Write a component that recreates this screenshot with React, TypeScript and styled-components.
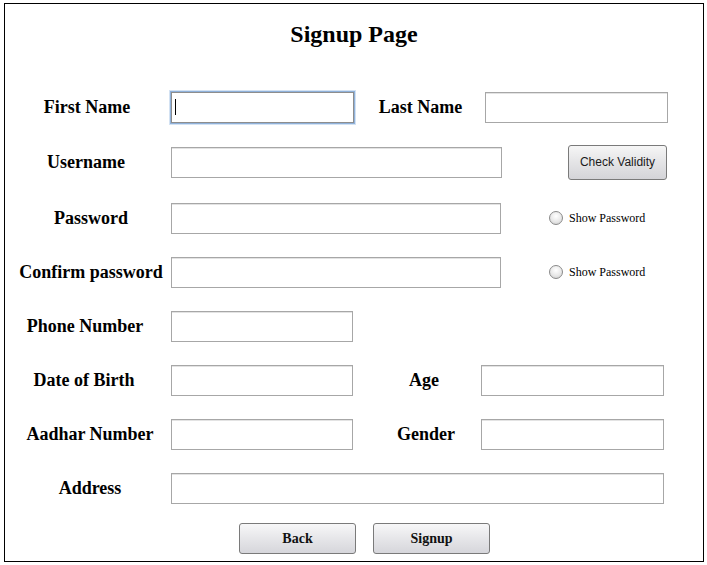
import { FC } from 'react';
import styled, { createGlobalStyle, css } from 'styled-components';

const GlobalStyle = createGlobalStyle`
  body {
    margin: 0;
    background: #ffffff;
    font-family: 'Liberation Serif', 'Times New Roman', serif;
  }
`;

const Frame = styled.div`
  box-sizing: border-box;
  width: 700px;
  height: 559px;
  margin: 3px 0 0 4px;
  border: 1px solid #000000;
  background: #ffffff;
  padding-top: 16px;
`;

const Title = styled.h1`
  margin: 0;
  font-size: 24px;
  line-height: 28px;
  font-weight: bold;
  text-align: center;
  color: #000000;
`;

const Form = styled.div`
  display: flex;
  flex-direction: column;
  gap: 24px;
  margin-top: 44px;
`;

const Row = styled.div<{ $mt?: number }>`
  display: flex;
  align-items: center;
  height: 30px;
  margin-top: ${(p) => p.$mt ?? 0}px;
`;

const Label = styled.label<{ $w: number; $dx?: number }>`
  flex: none;
  box-sizing: border-box;
  width: ${(p) => p.$w}px;
  text-align: center;
  white-space: nowrap;
  font-size: 18px;
  font-weight: bold;
  color: #000000;
  padding-left: ${(p) => Math.max(0, (p.$dx ?? 0) * 2)}px;
  padding-right: ${(p) => Math.max(0, -(p.$dx ?? 0) * 2)}px;
`;

const focusRing = css`
  border-color: #8d8d8d;
  box-shadow: 0 0 0 1px #8fb1da, 0 0 0 2px #d3e2f3;
`;

const FieldBox = styled.span`
  position: relative;
  display: flex;
  flex: none;
`;

const Caret = styled.span`
  position: absolute;
  left: 4px;
  top: 7px;
  width: 1px;
  height: 16px;
  background: #000000;
  pointer-events: none;
`;

const Field = styled.input<{ $w: number; $focused?: boolean }>`
  flex: none;
  box-sizing: border-box;
  width: ${(p) => p.$w}px;
  height: 31px;
  margin: 0;
  padding: 0 3px;
  border: 1px solid #a7a7a7;
  box-shadow: inset 0 1px 0 #e3e3e3;
  background: #ffffff;
  font-family: 'Liberation Sans', Arial, sans-serif;
  font-size: 13px;
  outline: none;
  caret-color: transparent;

  ${(p) => p.$focused && focusRing}
`;

const CheckButton = styled.button`
  flex: none;
  width: 99px;
  height: 35px;
  margin-left: 66px;
  border: 1px solid #7a7a7a;
  border-radius: 3px;
  background: linear-gradient(#f6f6f6, #e4e4e6 50%, #d4d4d8);
  font-family: 'Liberation Sans', Arial, sans-serif;
  font-size: 12px;
  color: #1a1a1a;
  padding: 0;
`;

const Toggle = styled.label`
  display: flex;
  align-items: center;
  gap: 6px;
  margin-left: 48px;
  font-size: 12px;
  color: #000000;
`;

const RadioDot = styled.span`
  flex: none;
  box-sizing: border-box;
  width: 14px;
  height: 14px;
  border-radius: 50%;
  border: 1px solid #8a8a8a;
  background: radial-gradient(circle at 50% 35%, #ffffff, #e8e8e8 55%, #c9c9c9);
`;

const Actions = styled.div`
  display: flex;
  gap: 17px;
  margin-top: 20px;
  padding-left: 234px;
`;

const ActionButton = styled.button`
  width: 117px;
  height: 31px;
  padding: 0;
  border: 1px solid #7a7a7a;
  border-radius: 3px;
  background: linear-gradient(#f7f7f8, #e6e6e9 50%, #d6d6db);
  font-family: 'Liberation Serif', 'Times New Roman', serif;
  font-size: 14px;
  font-weight: bold;
  color: #111111;
`;

const ShowPassword: FC = () => (
  <Toggle>
    <RadioDot />
    Show Password
  </Toggle>
);

const App: FC = () => {
  return (
    <>
      <GlobalStyle />
      <Frame>
        <Title>Signup Page</Title>
        <Form>
          <Row>
            <Label $w={166} $dx={-1}>First Name</Label>
            <FieldBox>
              <Field $w={183} $focused />
              <Caret />
            </FieldBox>
            <Label $w={131} $dx={1}>Last Name</Label>
            <Field $w={183} />
          </Row>
          <Row $mt={1}>
            <Label $w={166} $dx={-2}>Username</Label>
            <Field $w={331} />
            <CheckButton>Check Validity</CheckButton>
          </Row>
          <Row $mt={2}>
            <Label $w={166} $dx={3}>Password</Label>
            <Field $w={330} />
            <ShowPassword />
          </Row>
          <Row>
            <Label $w={166} $dx={3}>Confirm password</Label>
            <Field $w={330} />
            <ShowPassword />
          </Row>
          <Row>
            <Label $w={166} $dx={-3}>Phone Number</Label>
            <Field $w={182} />
          </Row>
          <Row>
            <Label $w={166} $dx={-4}>Date of Birth</Label>
            <Field $w={182} />
            <Label $w={128} $dx={7}>Age</Label>
            <Field $w={183} />
          </Row>
          <Row>
            <Label $w={166} $dx={2}>Aadhar Number</Label>
            <Field $w={182} />
            <Label $w={128} $dx={9}>Gender</Label>
            <Field $w={183} />
          </Row>
          <Row>
            <Label $w={166} $dx={2}>Address</Label>
            <Field $w={493} />
          </Row>
        </Form>
        <Actions>
          <ActionButton>Back</ActionButton>
          <ActionButton>Signup</ActionButton>
        </Actions>
      </Frame>
    </>
  );
};

export default App;
